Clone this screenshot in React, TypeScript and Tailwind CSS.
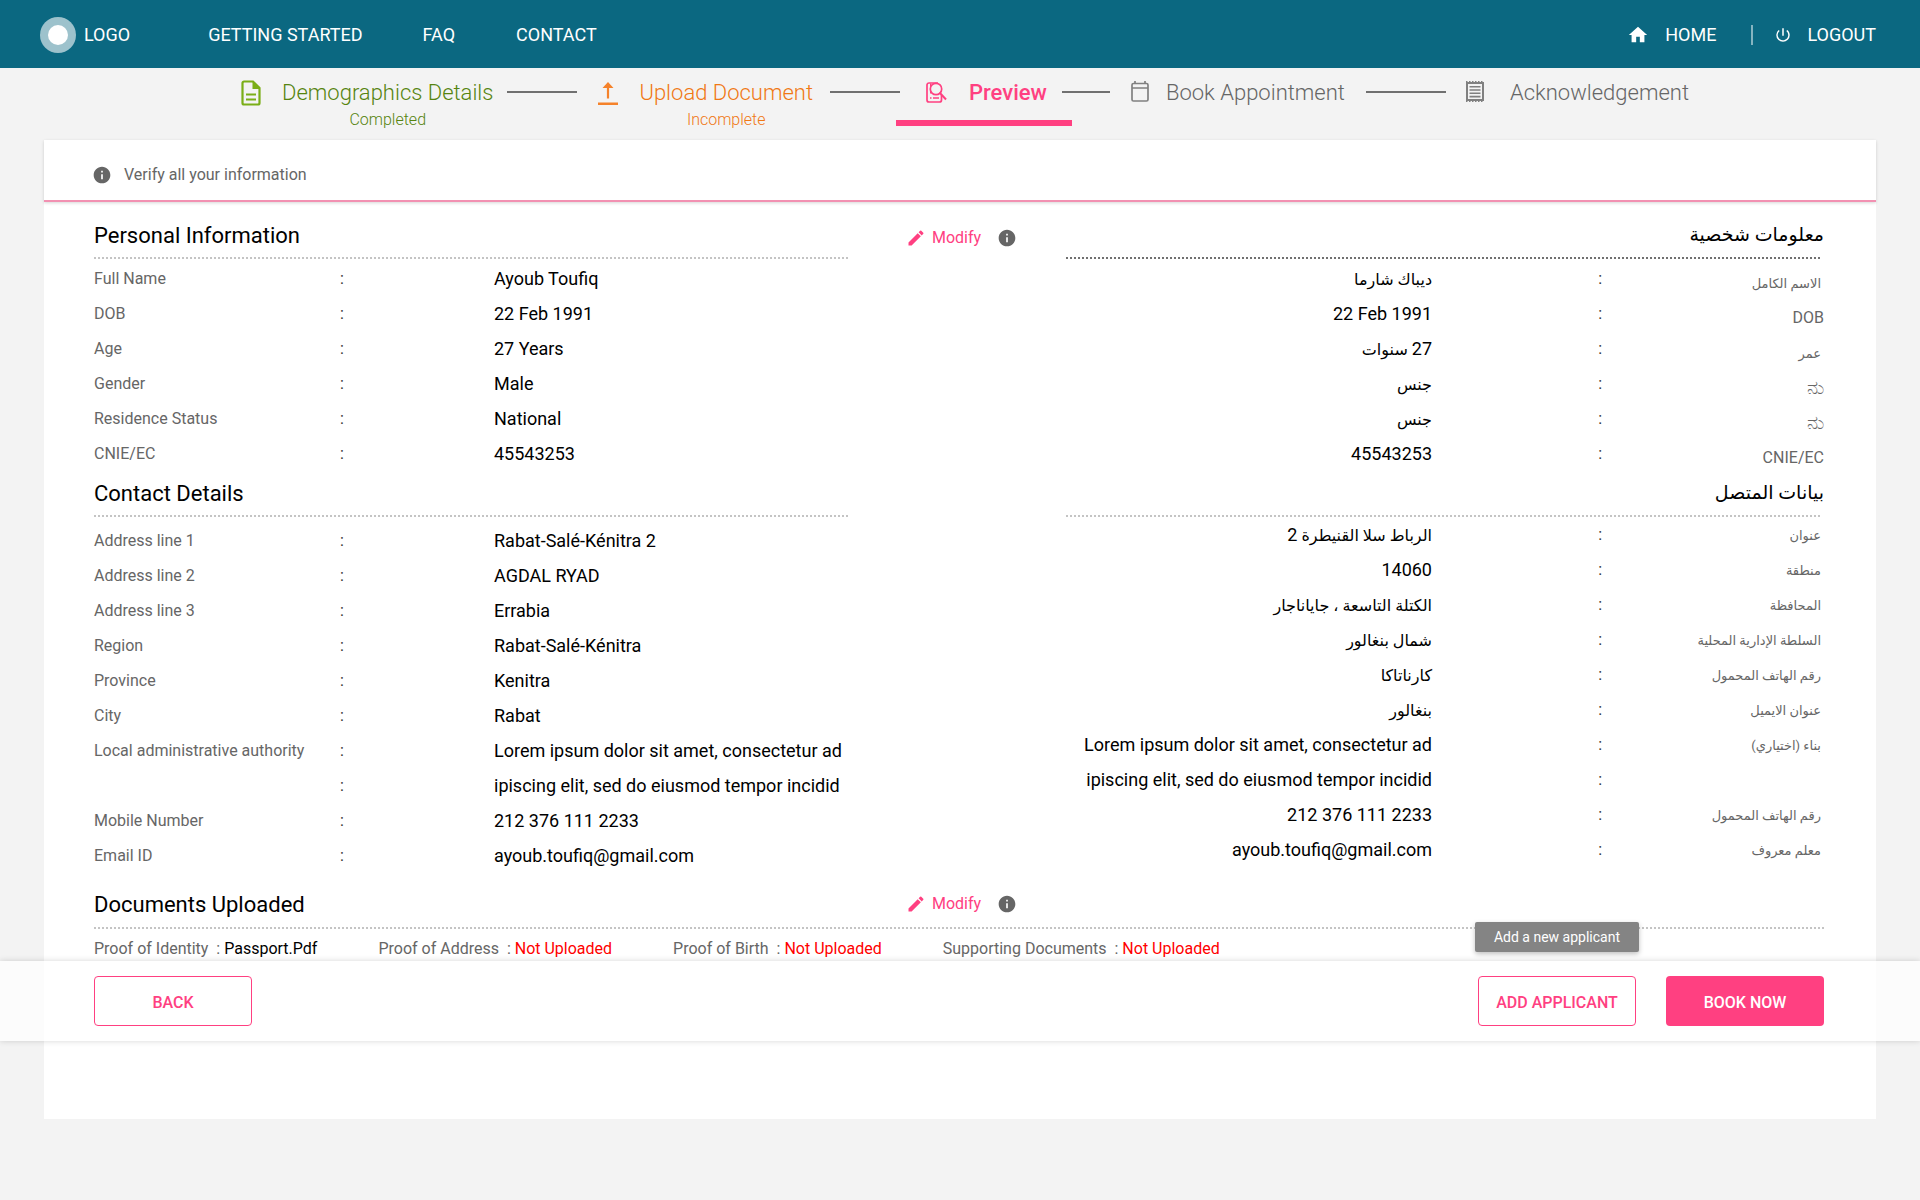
import type { ReactNode } from "react";
import { MdEdit, MdHome, MdInfo, MdPowerSettingsNew } from "react-icons/md";

type Row = { label: string; value: string };

const personal: Row[] = [
  { label: "Full Name", value: "Ayoub Toufiq" },
  { label: "DOB", value: "22 Feb 1991" },
  { label: "Age", value: "27 Years" },
  { label: "Gender", value: "Male" },
  { label: "Residence Status", value: "National" },
  { label: "CNIE/EC", value: "45543253" },
];

const personalArabic: Row[] = [
  { label: "الاسم الكامل", value: "ديباك شارما" },
  { label: "DOB", value: "22 Feb 1991" },
  { label: "عمر", value: "27 سنوات" },
  { label: "ನು", value: "جنس" },
  { label: "ನು", value: "جنس" },
  { label: "CNIE/EC", value: "45543253" },
];

const contact: Row[] = [
  { label: "Address line 1", value: "Rabat-Salé-Kénitra 2" },
  { label: "Address line 2", value: "AGDAL RYAD" },
  { label: "Address line 3", value: "Errabia" },
  { label: "Region", value: "Rabat-Salé-Kénitra" },
  { label: "Province", value: "Kenitra" },
  { label: "City", value: "Rabat" },
  { label: "Local administrative authority", value: "Lorem ipsum dolor sit amet, consectetur ad" },
  { label: "", value: "ipiscing elit, sed do eiusmod tempor incidid" },
  { label: "Mobile Number", value: "212 376 111 2233" },
  { label: "Email ID", value: "ayoub.toufiq@gmail.com" },
];

const contactArabic: Row[] = [
  { label: "عنوان", value: "الرباط سلا القنيطرة 2" },
  { label: "منطقة", value: "14060" },
  { label: "المحافظة", value: "الكتلة التاسعة ، جاياناجار" },
  { label: "السلطة الإدارية المحلية", value: "شمال بنغالور" },
  { label: "رقم الهاتف المحمول", value: "كارناتاكا" },
  { label: "عنوان الايميل", value: "بنغالور" },
  { label: "بناء (اختياري)", value: "Lorem ipsum dolor sit amet, consectetur ad" },
  { label: "", value: "ipiscing elit, sed do eiusmod tempor incidid" },
  { label: "رقم الهاتف المحمول", value: "212 376 111 2233" },
  { label: "معلم معروف", value: "ayoub.toufiq@gmail.com" },
];

const documents = [
  { label: "Proof of Identity", value: "Passport.Pdf", uploaded: true },
  { label: "Proof of Address", value: "Not Uploaded", uploaded: false },
  { label: "Proof of Birth", value: "Not Uploaded", uploaded: false },
  { label: "Supporting Documents", value: "Not Uploaded", uploaded: false },
];

const isLatin = (text: string) => /^[\x20-\x7e]+$/.test(text);
const isArabic = (text: string) => /[\u0600-\u06ff]/.test(text);

function DottedLine({ dark = false }: { dark?: boolean }) {
  return (
    <div
      className={
        dark
          ? "h-[2px] w-full bg-[repeating-linear-gradient(90deg,#707070_0_2px,transparent_2px_4px)]"
          : "h-[2px] w-full bg-[repeating-linear-gradient(90deg,#c4c4c4_0_2px,transparent_2px_4px)]"
      }
    />
  );
}

function Details({ rows }: { rows: Row[] }) {
  return (
    <dl>
      {rows.map((row, i) => (
        <div key={i} className="grid h-[35px] grid-cols-[246px_154px_1fr] items-center">
          <dt className="text-base text-[#666666]">{row.label}</dt>
          <span className="text-base text-[#333333]">:</span>
          <dd className="text-lg whitespace-nowrap text-black">{row.value}</dd>
        </div>
      ))}
    </dl>
  );
}

/* Arabic glyphs run wide next to Latin ones, so they are set smaller; digits keep the Latin size. */
function ArabicValue({ text }: { text: string }) {
  if (isLatin(text)) return <bdi dir="ltr">{text}</bdi>;
  return (
    <>
      {text.split(/(\d+)/).map((part, i) =>
        /\d/.test(part) ? (
          <span key={i}>{part}</span>
        ) : (
          <span key={i} className="text-base leading-6">{part}</span>
        ),
      )}
    </>
  );
}

function ArabicLabel({ text }: { text: string }) {
  if (isArabic(text)) return <span className="pr-[3px] text-[13px]">{text}</span>;
  if (isLatin(text)) return <bdi dir="ltr">{text}</bdi>;
  return <span className="text-xl leading-6">{text}</span>;
}

function ArabicDetails({ rows, lowLabels = false }: { rows: Row[]; lowLabels?: boolean }) {
  return (
    <dl dir="rtl">
      {rows.map((row, i) => (
        <div key={i} className="grid h-[35px] grid-cols-[222px_170px_1fr] items-center">
          <dt className={lowLabels ? "pt-2 text-base text-[#666666]" : "text-base text-[#666666]"}>
            <ArabicLabel text={row.label} />
          </dt>
          <span className="text-base text-[#333333]">:</span>
          <dd className="text-lg whitespace-nowrap text-black">
            <ArabicValue text={row.value} />
          </dd>
        </div>
      ))}
    </dl>
  );
}

function Modify() {
  return (
    <div className="flex items-center justify-center gap-4 pl-2">
      <button type="button" className="flex cursor-pointer items-center gap-1.5 text-base text-[#ff4081]">
        <MdEdit className="size-5" />
        Modify
      </button>
      <MdInfo className="size-5 text-[#666666]" />
    </div>
  );
}

function Connector({ className }: { className: string }) {
  return <li aria-hidden="true" className={`mt-[23px] h-[2px] shrink-0 bg-[#707070] ${className}`} />;
}

function DocumentIcon() {
  return (
    <svg viewBox="0 0 20 26" className="mt-3 h-[26px] w-5 text-[#7aae17]" fill="none" stroke="currentColor">
      <path d="M12 1.5H3A1.5 1.5 0 0 0 1.500 3v20A1.500 1.500 0 0 0 3 24.500h14a1.500 1.500 0 0 0 1.500-1.500V8z" strokeWidth="2.200" />
      <path d="M11.500 1v8H19z" fill="currentColor" stroke="none" />
      <path d="M5 14.500h10M5 19.500h10" strokeWidth="2.200" />
    </svg>
  );
}

function UploadIcon() {
  return (
    <svg viewBox="0 0 22 24" className="mt-3.5 h-6 w-[22px] text-[#f5822a]" fill="currentColor">
      <path d="M11 0l5.500 6h-4.400v10.500H9.900V6H5.500zM1 20.500h20v2.500H1z" />
    </svg>
  );
}

function PreviewIcon() {
  return (
    <svg viewBox="0 0 21 21" className="mt-3.5 size-[21px] text-[#ff4081]" fill="none" stroke="currentColor" strokeWidth="1.700">
      <path d="M12 1H3a2 2 0 0 0-2 2v15a2 2 0 0 0 2 2h10.500a2 2 0 0 0 2-2v-5" />
      <path d="M4.500 1.500v10" strokeWidth="1" />
      <circle cx="10" cy="7" r="5.700" />
      <path d="M13.500 10.500l6.500 7" strokeWidth="2" />
      <path d="M4 16h1.500M7 16h6" strokeWidth="1.500" />
    </svg>
  );
}

function CalendarIcon() {
  return (
    <svg viewBox="0 0 18 22" className="mt-[13px] h-[22px] w-[18px] text-[#808080]" fill="none" stroke="currentColor" strokeWidth="1.700">
      <rect x="1" y="2.500" width="16" height="17.500" rx="1.500" />
      <path d="M1 7h16M4 0v3M14 0v3" />
    </svg>
  );
}

function ReceiptIcon() {
  return (
    <svg viewBox="0 0 18 22" className="mt-[13px] h-[22px] w-[18px] text-[#808080]" fill="none" stroke="currentColor">
      <path d="M1 2v17M17 2v17M0 2h18M0 19h18" strokeWidth="2" />
      <path d="M0 .6h18M0 20.400h18" strokeWidth="1.200" strokeDasharray="1.500 1.500" />
      <path d="M3.500 5.700h11M3.500 9h11M3.500 12.300h11M3.500 15.600h11" strokeWidth="1.600" />
    </svg>
  );
}

function Step({
  icon,
  title,
  note,
  gap,
  tone,
}: {
  icon: ReactNode;
  title: string;
  note?: string;
  gap: string;
  tone: string;
}) {
  return (
    <li className={`flex shrink-0 ${gap} ${tone}`}>
      {icon}
      <a href="#" className="flex flex-col items-center pt-[9px]">
        <span className="text-[22px] leading-8">{title}</span>
        {note && <span className="text-base leading-[22px]">{note}</span>}
      </a>
    </li>
  );
}

export default function App() {
  return (
    <div className="min-h-screen bg-[#f3f3f3] font-[Roboto,'DejaVu_Sans',sans-serif]">
      <header className="flex h-[68px] items-center justify-between bg-[#0b6881] pt-0.5 pr-11 pl-10 text-lg text-white">
        <nav className="flex items-center">
          <a href="#" className="mr-[78px] flex items-center gap-2">
            <span className="flex size-9 items-center justify-center rounded-full bg-white/60">
              <span className="size-5 rounded-full bg-white" />
            </span>
            LOGO
          </a>
          <a href="#" className="mr-[60px]">GETTING STARTED</a>
          <a href="#" className="mr-[61px]">FAQ</a>
          <a href="#">CONTACT</a>
        </nav>
        <nav className="flex items-center">
          <a href="#" className="flex items-center gap-4">
            <MdHome className="size-[22px]" />
            HOME
          </a>
          <span className="mr-[21px] ml-[35px] h-5 w-[2px] bg-white/50" />
          <a href="#" className="flex items-center gap-[15px]">
            <MdPowerSettingsNew className="size-[18px]" />
            LOGOUT
          </a>
        </nav>
      </header>

      <ol className="flex h-[72px] justify-center pl-[10px]">
        <Step icon={<DocumentIcon />} title="Demographics Details" note="Completed" gap="gap-[21px]" tone="font-light text-[#56840f]" />
        <Connector className="mr-5 ml-3.5 w-[70px]" />
        <Step icon={<UploadIcon />} title="Upload Document" note="Incomplete" gap="gap-5" tone="font-light text-[#f07814]" />
        <Connector className="mr-[26px] ml-[17px] w-[70px]" />
        <li className="relative flex shrink-0 gap-[22px] font-medium text-[#ff4081]">
          <PreviewIcon />
          <a href="#" aria-current="step" className="pt-[9px] text-[22px] leading-8">Preview</a>
          <span className="absolute top-[52px] -right-[25px] -left-[30px] h-[6px] bg-[#ff4081]" />
        </li>
        <Connector className="mr-[21px] ml-[15px] w-12" />
        <Step icon={<CalendarIcon />} title="Book Appointment" gap="gap-[17px]" tone="font-light text-[#666666]" />
        <Connector className="mr-5 ml-[21px] w-20" />
        <Step icon={<ReceiptIcon />} title="Acknowledgement" gap="gap-[26px]" tone="font-light text-[#666666]" />
      </ol>

      <div className="grid">
        <main className="col-start-1 row-start-1 mx-11 bg-white pb-[158px]">
          <p className="flex h-[62px] items-center gap-3 border-b-2 border-[#f291b2] pt-[10px] pl-12 text-base text-[#666666] shadow-[0_1px_3px_rgba(0,0,0,0.16)]">
            <MdInfo className="size-5" />
            Verify all your information
          </p>

          <div className="pr-[52px] pl-[50px]">
            <section className="grid grid-cols-[755fr_217px_758fr]">
              <div>
                <h2 className="flex h-[55px] items-center pt-3 text-[22px]">Personal Information</h2>
                <DottedLine />
                <div className="pt-0.5">
                  <Details rows={personal} />
                </div>
              </div>
              <div className="pt-6">
                <Modify />
              </div>
              <div>
                <h2 dir="rtl" className="flex h-[55px] items-center pt-3 text-[19px]">معلومات شخصية</h2>
                <div className="pr-[3px]">
                  <DottedLine dark />
                </div>
                <div className="pt-0.5">
                  <ArabicDetails rows={personalArabic} lowLabels />
                </div>
              </div>
            </section>

            <section className="grid grid-cols-[755fr_217px_758fr]">
              <div>
                <h2 className="flex h-11 items-center text-[22px]">Contact Details</h2>
                <DottedLine />
                <div className="pt-1.5">
                  <Details rows={contact} />
                </div>
              </div>
              <div />
              <div>
                <h2 dir="rtl" className="flex h-11 items-center text-[19px]">بيانات المتصل</h2>
                <div className="pr-[3px]">
                  <DottedLine />
                </div>
                <ArabicDetails rows={contactArabic} />
              </div>
            </section>

            <section>
              <div className="grid h-[54px] grid-cols-[755fr_217px_758fr] items-center pt-2">
                <h2 className="text-[22px]">Documents Uploaded</h2>
                <Modify />
              </div>
              <DottedLine />
              <dl className="flex h-8 items-center gap-[61px] pt-2 text-base">
                {documents.map((doc) => (
                  <div key={doc.label} className="flex">
                    <dt className="text-[#666666]">{doc.label}&nbsp; :&nbsp;</dt>
                    <dd className={doc.uploaded ? "text-black" : "text-[#ff0000]"}>{doc.value}</dd>
                  </div>
                ))}
              </dl>
            </section>
          </div>
        </main>

        <footer className="z-10 col-start-1 row-start-1 mb-[78px] flex h-20 items-center gap-[30px] self-end bg-white/70 pr-24 pl-[94px] text-base font-medium shadow-[0_0_6px_rgba(0,0,0,0.16)]">
          <button type="button" className="mr-auto h-[50px] w-[158px] cursor-pointer rounded border border-[#ff4081] bg-white pt-[3px] text-[#ff4081]">
            BACK
          </button>
          <div className="relative">
            <span
              role="tooltip"
              className="absolute bottom-[74px] -left-[3px] flex h-[30px] w-[164px] items-center justify-center rounded-xs bg-[#848484] text-sm font-normal text-white shadow-[0_2px_5px_rgba(0,0,0,0.25)]"
            >
              Add a new applicant
            </span>
            <button type="button" className="h-[50px] w-[158px] cursor-pointer rounded border border-[#ff4081] bg-white pt-[3px] text-[#ff4081]">
              ADD APPLICANT
            </button>
          </div>
          <button type="button" className="h-[50px] w-[158px] cursor-pointer rounded bg-[#ff4081] pt-[3px] text-white">
            BOOK NOW
          </button>
        </footer>
      </div>
    </div>
  );
}
